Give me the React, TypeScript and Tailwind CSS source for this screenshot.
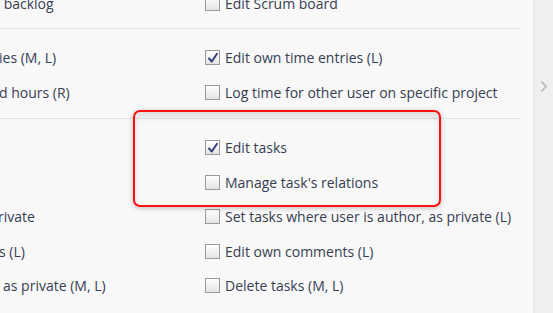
import React from "react";

type Row = { left?: string; leftClass?: string; label: string; checked?: boolean };

function Box({ checked }: { checked?: boolean }) {
  return (
    <span className="relative flex h-[15px] w-[15px] shrink-0 items-center justify-center border border-[#9a9a9a] bg-gradient-to-b from-[#ffffff] to-[#e4e4e4]">
      {checked && (
        <svg width="12" height="12" viewBox="0 0 12 12" className="absolute">
          <path d="M2 6.5 L4.8 9.5 L10 1.8" fill="none" stroke="#34407a" strokeWidth="2" strokeLinecap="round" strokeLinejoin="round" />
        </svg>
      )}
    </span>
  );
}

function RowView({ r }: { r: Row }) {
  return (
    <div className="flex h-[34.5px] items-center">
      <div className="w-[205px] shrink-0 overflow-hidden whitespace-nowrap">
        {r.left && <span className={"block " + (r.leftClass ?? "")}>{r.left}</span>}
      </div>
      <label className="flex items-center gap-[5px] whitespace-nowrap">
        <Box checked={r.checked} />
        <span>{r.label}</span>
      </label>
    </div>
  );
}

function Group({ rows, className }: { rows: Row[]; className?: string }) {
  return (
    <div className={"border-b border-[#e2e2e2] " + (className ?? "")}>
      {rows.map((r, i) => (
        <RowView key={i} r={r} />
      ))}
    </div>
  );
}

export default function App() {
  return (
    <div
      className="flex h-[313px] w-[553px] overflow-hidden bg-[#f8f8f8] text-[14px] text-[#363e52]"
      style={{ fontFamily: '"Open Sans", "Noto Sans", sans-serif' }}
    >
      <div className="relative w-[533px] shrink-0">
        <div className="w-[520px]">
          <Group className="-mt-[14px] pb-[7.5px]" rows={[{ left: "t backlog", leftClass: "-ml-[5px]", label: "Edit Scrum board" }]} />
          <Group
            className="pt-[11.5px] pb-[8.5px]"
            rows={[
              { left: "ies (M, L)", leftClass: "-ml-[1px]", label: "Edit own time entries (L)", checked: true },
              { left: "d hours (R)", leftClass: "-ml-[1px]", label: "Log time for other user on specific project" },
            ]}
          />
          <div className="pt-[11.5px]">
            <RowView r={{ label: "Edit tasks", checked: true }} />
            <RowView r={{ label: "Manage task's relations" }} />
            <RowView r={{ left: "rivate", leftClass: "-ml-[2px]", label: "Set tasks where user is author, as private (L)" }} />
            <RowView r={{ left: "s (L)", leftClass: "-ml-[1px]", label: "Edit own comments (L)" }} />
            <RowView r={{ left: "as private (M, L)", leftClass: "ml-[3px]", label: "Delete tasks (M, L)" }} />
            <RowView r={{ left: "", label: "Delete own comments (L)" }} />
          </div>
        </div>
        <div className="pointer-events-none absolute left-[133px] top-[110px] h-[97px] w-[308px] rounded-[7px] border-2 border-[#ff1010] shadow-[inset_0_5px_6px_rgba(0,0,0,0.10),0_1px_5px_rgba(0,0,0,0.25)]" />
      </div>
      <div className="flex flex-1 items-start justify-center border-l border-[#e4e4e4] bg-[#efefef] pt-[80px]">
        <svg width="8" height="13" viewBox="0 0 8 13">
          <path d="M1.5 1.5 L6 6.5 L1.5 11.5" fill="none" stroke="#bdbdbd" strokeWidth="1.8" />
        </svg>
      </div>
    </div>
  );
}
